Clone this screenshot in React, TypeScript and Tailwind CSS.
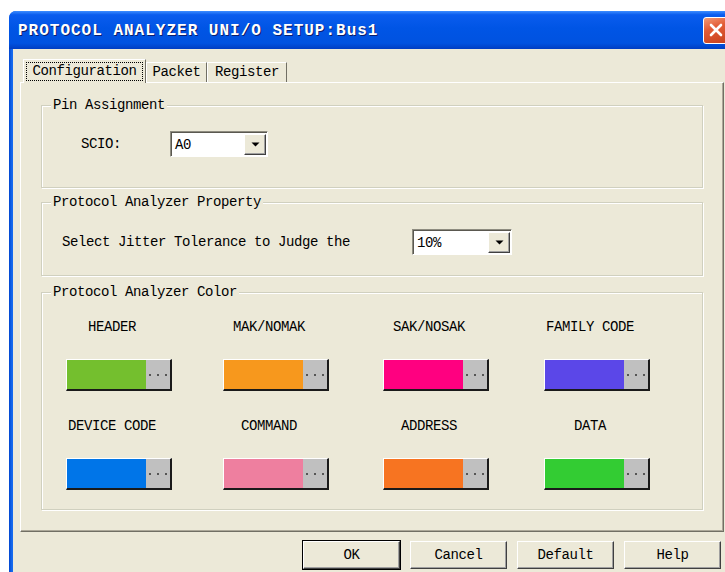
import type { ReactNode } from "react";

const mono = "font-['Liberation_Mono','DejaVu_Sans_Mono',monospace] text-[14px] leading-[16px] tracking-[-0.4px] text-black";

type Swatch = { label: string; color: string };

const colors: Swatch[] = [
  { label: "HEADER", color: "#74BF2E" },
  { label: "MAK/NOMAK", color: "#F7981D" },
  { label: "SAK/NOSAK", color: "#FF0080" },
  { label: "FAMILY CODE", color: "#5B47E8" },
  { label: "DEVICE CODE", color: "#0075E8" },
  { label: "COMMAND", color: "#EE7F9F" },
  { label: "ADDRESS", color: "#F77421" },
  { label: "DATA", color: "#33CC33" },
];

function Group({ title, className, children }: { title: string; className?: string; children: ReactNode }) {
  return (
    <fieldset
      className={`w-[662px] border border-[#D0D0BF] shadow-[inset_1px_1px_0_#fff,1px_1px_0_#fff] ${className ?? ""}`}
    >
      <legend className={`${mono} ml-[9px] px-[2px] bg-[#ECE9D8]`}>{title}</legend>
      {children}
    </fieldset>
  );
}

function Combo({ value, className }: { value: string; className: string }) {
  return (
    <div
      className={`h-[26px] flex items-center bg-white border border-[#8E8C80] border-b-white border-r-white shadow-[inset_1px_1px_0_#5A5850] ${className}`}
    >
      <span className={`${mono} flex-1 pl-[4px] pt-px`}>{value}</span>
      <div className="w-[22px] h-[21px] mr-[1px] mt-px flex items-center justify-center bg-[#ECE9D8] border border-t-white border-l-white border-b-[#404040] border-r-[#404040] shadow-[inset_-1px_-1px_0_#A0A0A0]">
        <svg width="9" height="5" viewBox="0 0 9 5">
          <path d="M0.5 0.5 H8.5 L4.5 4.5 Z" fill="#000" />
        </svg>
      </div>
    </div>
  );
}

function ColorPick({ item }: { item: Swatch }) {
  return (
    <div className="flex flex-col">
      <div className={`${mono} w-[106px] pr-[14px] text-center whitespace-nowrap`}>{item.label}</div>
      <div className="mt-[24px] w-[106px] h-[32px] flex border-t border-l border-white border-r-2 border-b-2 border-r-[#1A1A1A] border-b-[#1A1A1A]">
        <div className="w-[79px] h-full" style={{ backgroundColor: item.color }} />
        <div className="flex-1 h-full bg-[#C0C0C0] flex items-center justify-center gap-[6px]">
          <span className="w-[2px] h-[2px] bg-[#555]" />
          <span className="w-[2px] h-[2px] bg-[#555]" />
          <span className="w-[2px] h-[2px] bg-[#555]" />
        </div>
      </div>
    </div>
  );
}

function Button({ label, primary }: { label: string; primary?: boolean }) {
  return (
    <button
      className={`${mono} w-[97px] h-[28px] bg-[#ECE9D8] border border-t-white border-l-white border-b-[#404040] border-r-[#404040] shadow-[inset_-1px_-1px_0_#A0A0A0] ${
        primary ? "outline outline-1 outline-black" : ""
      }`}
    >
      {label}
    </button>
  );
}

export default function App() {
  return (
    <div className="w-[725px] h-[572px] overflow-hidden bg-white pl-[9px] pt-[11px]">
      <div className="w-[724px] h-[600px] rounded-t-[7px] overflow-hidden bg-[#0050DC] flex flex-col">
        {/* title bar */}
        <div className="h-[38px] shrink-0 flex items-center justify-between pl-[9px] pr-[4px] bg-[linear-gradient(180deg,#3D8DFF_0%,#0A5CEE_10%,#0055E5_45%,#0052E0_85%,#003DC2_100%)]">
          <span className="font-['Liberation_Mono',monospace] text-[16px] font-bold tracking-[1px] text-white [text-shadow:1px_1px_0_#0A1E6E] pt-[1px]">
            PROTOCOL ANALYZER UNI/O SETUP:Bus1
          </span>
          <div className="w-[26px] h-[27px] rounded-[3px] border border-white flex items-center justify-center bg-[linear-gradient(160deg,#F29A74_0%,#E25B36_40%,#C6401D_100%)]">
            <svg width="14" height="14" viewBox="0 0 14 14">
              <path d="M2 2 L12 12 M12 2 L2 12" stroke="#fff" strokeWidth="2.6" strokeLinecap="round" />
            </svg>
          </div>
        </div>

        {/* dialog body */}
        <div className="flex-1 px-[4px] bg-[linear-gradient(90deg,#0046D0_0px,#166AEE_3px,#0046D0_100%)]">
          <div className="h-full bg-[#ECE9D8] pl-[7px] pr-[5px] pt-[10px]">
            <div className="h-[23px] flex items-end pl-[3px]">
              <div className="relative z-10 -mb-px h-[24px] w-[123px] bg-[#ECE9D8] border-t border-l border-white border-r border-r-[#716F64] pt-[2px] pl-[2px]">
                <span className={`${mono} block w-[117px] h-[19px] border border-dotted border-black text-center leading-[17px]`}>
                  Configuration
                </span>
              </div>
              <div className={`${mono} h-[20px] w-[61px] border-t border-l border-white border-r border-r-[#716F64] text-center leading-[18px]`}>
                Packet
              </div>
              <div className={`${mono} h-[20px] w-[80px] border-t border-l border-white border-r border-r-[#716F64] text-center leading-[18px]`}>
                Register
              </div>
            </div>

            {/* tab page */}
            <div className="w-[704px] border border-white border-r-[#716F64] border-b-[#716F64] shadow-[inset_-1px_-1px_0_#ACA899] pt-[14px] pb-[21px] px-[20px]">
              <Group title="Pin Assignment" className="pb-[30px]">
                <div className="mt-[18px] flex items-center pl-[39px]">
                  <span className={`${mono} w-[89px]`}>SCIO:</span>
                  <Combo value="A0" className="w-[98px]" />
                </div>
              </Group>

              <Group title="Protocol Analyzer Property" className="mt-[6px] pb-[20px]">
                <div className="mt-[19px] flex items-center pl-[20px]">
                  <span className={`${mono} w-[350px] whitespace-nowrap`}>Select Jitter Tolerance to Judge the</span>
                  <Combo value="10%" className="w-[100px]" />
                </div>
              </Group>

              <Group title="Protocol Analyzer Color" className="mt-[8px] pb-[19px]">
                <div className="mt-[19px] pl-[24px] grid grid-cols-[157px_160px_161px_106px] gap-y-[27px]">
                  {colors.map((c) => (
                    <ColorPick key={c.label} item={c} />
                  ))}
                </div>
              </Group>
            </div>

            <div className="mt-[9px] flex justify-end gap-[10px] pr-[3px]">
              <Button label="OK" primary />
              <Button label="Cancel" />
              <Button label="Default" />
              <Button label="Help" />
            </div>
          </div>
        </div>
      </div>
    </div>
  );
}
